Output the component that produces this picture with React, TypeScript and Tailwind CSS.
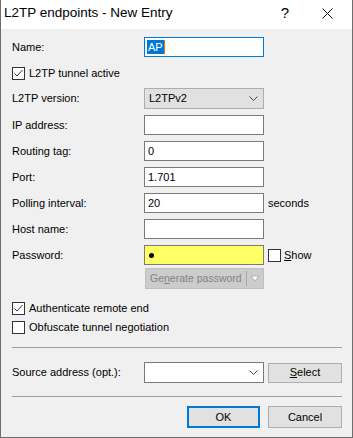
import React from "react";

const font = { fontFamily: '"Liberation Sans", Arial, sans-serif' };

function Check({ checked }: { checked?: boolean }) {
    return (
        <span className="inline-flex w-[13px] h-[13px] border border-[#333333] bg-white items-center justify-center shrink-0">
            {checked && (
                <svg width="11" height="11" viewBox="0 0 11 11">
                    <path d="M1.5 5.5 L4 8 L9.5 2" fill="none" stroke="#333333" strokeWidth="1" />
                </svg>
            )}
        </span>
    );
}

function Chevron() {
    return (
        <svg width="9" height="5" viewBox="0 0 9 5">
            <path d="M0.5 0.5 L4.5 4.5 L8.5 0.5" fill="none" stroke="#444444" strokeWidth="1" />
        </svg>
    );
}

function Field({ label, children, mt = "mt-[6px]" }: { label: string; children: React.ReactNode; mt?: string }) {
    return (
        <div className={`flex items-center ${mt}`}>
            <span className="w-[132px] shrink-0">{label}</span>
            {children}
        </div>
    );
}

function TextBox({ value, extra }: { value?: string; extra?: string }) {
    return (
        <div className={`w-[120px] h-[20px] border border-[#7a7a7a] bg-white flex items-center px-[3px] ${extra ?? ""}`}>
            {value}
        </div>
    );
}

function Separator({ mt }: { mt: string }) {
    return <div className={`${mt} h-px bg-[#a0a0a0] mr-[10px]`} />;
}

export default function App() {
    return (
        <div style={font} className="w-[353px] h-[438px] flex flex-col text-[11px] text-black bg-white border-x border-b border-[#6e6e6e]">
            <div className="h-[29px] bg-white flex items-center shrink-0">
                <span className="pl-[3px] text-[13.5px] pb-[3px]">L2TP endpoints - New Entry</span>
                <span className="ml-auto mr-[33px] text-[15px] pb-[3px]">?</span>
                <svg width="11" height="11" viewBox="0 0 11 11" className="mr-[19px] mb-[3px]">
                    <path d="M0.5 0.5 L10.5 10.5 M10.5 0.5 L0.5 10.5" stroke="#111111" strokeWidth="1" />
                </svg>
            </div>

            <div className="flex-1 bg-[#f0f0f0] pl-[11px] flex flex-col">
                <Field label="Name:" mt="mt-[8px]">
                    <div className="w-[120px] h-[20px] border border-[#0078d7] bg-white flex items-center px-[2px]">
                        <span className="bg-[#0078d7] text-white px-px leading-[14px]">AP</span>
                        <span className="w-px h-[14px] bg-[#ff6a00]" />
                    </div>
                </Field>

                <label className="flex items-center gap-[4px] mt-[10px] h-[13px]">
                    <Check checked />
                    <span>L2TP tunnel active</span>
                </label>

                <Field label="L2TP version:" mt="mt-[8px]">
                    <div className="w-[120px] h-[21px] border border-[#adadad] bg-[#e1e1e1] flex items-center pl-[4px] pr-[5px] justify-between">
                        <span>L2TPv2</span>
                        <Chevron />
                    </div>
                </Field>

                <Field label="IP address:" mt="mt-[6px]">
                    <TextBox />
                </Field>
                <Field label="Routing tag:">
                    <TextBox value="0" />
                </Field>
                <Field label="Port:">
                    <TextBox value="1.701" />
                </Field>
                <Field label="Polling interval:">
                    <TextBox value="20" />
                    <span className="ml-[4px]">seconds</span>
                </Field>
                <Field label="Host name:">
                    <TextBox />
                </Field>
                <Field label="Password:">
                    <div className="w-[120px] h-[20px] border border-[#7a7a7a] bg-[#ffff66] flex items-center pl-[4px]">
                        <span className="w-[5px] h-[5px] rounded-full bg-black" />
                    </div>
                    <span className="ml-[4px] flex items-center gap-[3px]">
                        <Check />
                        <span><span className="underline">S</span>how</span>
                    </span>
                </Field>

                <div className="flex mt-[3px] pl-[133px]">
                    <div className="w-[119px] h-[21px] border border-[#bfbfbf] bg-[#cccccc] flex items-center text-[#838383] whitespace-nowrap">
                        <span className="pl-[4px] flex-1 text-[10.5px]">Ge<span className="underline">n</span>erate password</span>
                        <span className="w-px h-[15px] bg-[#a8a8a8]" />
                        <svg width="14" height="8" viewBox="0 0 14 8" className="mx-[1px]">
                            <path d="M3 1 L11 1 L7 6 Z" fill="#ffffff" stroke="#b0b0b0" strokeWidth="1" />
                        </svg>
                    </div>
                </div>

                <label className="flex items-center gap-[4px] mt-[13px] h-[13px]">
                    <Check checked />
                    <span>Authenticate remote end</span>
                </label>
                <label className="flex items-center gap-[4px] mt-[6px] h-[13px]">
                    <Check />
                    <span>Obfuscate tunnel negotiation</span>
                </label>

                <Separator mt="mt-[13px]" />

                <Field label="Source address (opt.):" mt="mt-[14px]">
                    <div className="w-[120px] h-[21px] border border-[#7a7a7a] bg-white flex items-center justify-end pr-[5px]">
                        <Chevron />
                    </div>
                    <button className="ml-[4px] w-[74px] h-[20px] border border-[#adadad] bg-[#e1e1e1] flex items-center justify-center">
                        <span><span className="underline">S</span>elect</span>
                    </button>
                </Field>

                <Separator mt="mt-[13px]" />

                <div className="flex justify-end mt-[9px] pr-[10px] gap-[8px]">
                    <button className="w-[73px] h-[22px] border-2 border-[#0078d7] bg-[#e1e1e1] flex items-center justify-center">
                        OK
                    </button>
                    <button className="w-[74px] h-[22px] border border-[#adadad] bg-[#e1e1e1] flex items-center justify-center">
                        Cancel
                    </button>
                </div>
            </div>
        </div>
    );
}
